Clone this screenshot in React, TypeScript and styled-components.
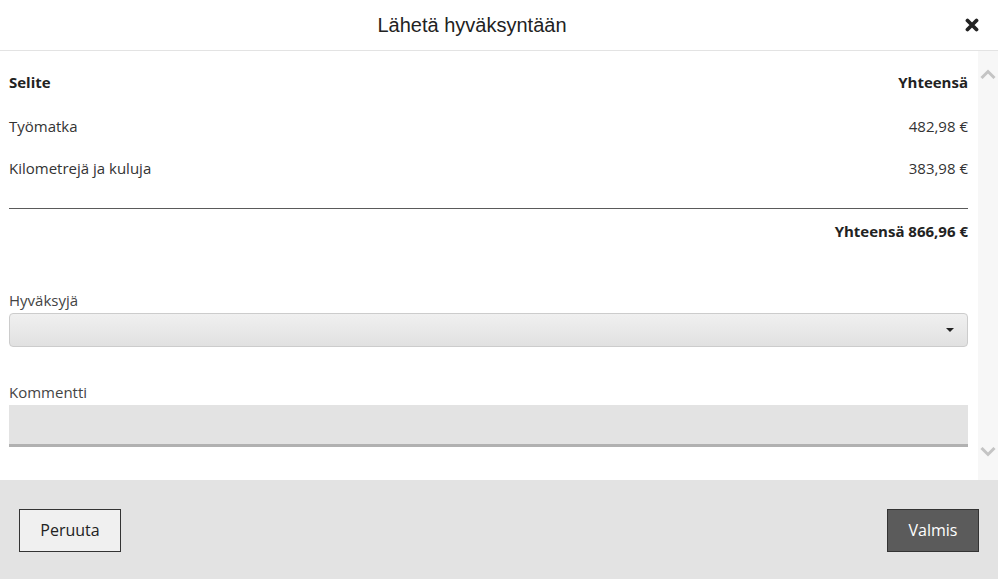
import React from 'react';
import styled, { createGlobalStyle } from 'styled-components';

const GlobalStyle = createGlobalStyle`
  html, body {
    margin: 0;
    padding: 0;
    background: #ffffff;
  }
  body {
    font-family: "Open Sans", "Noto Sans", sans-serif;
    color: #333;
  }
`;

const Dialog = styled.div`
  width: 998px;
  height: 579px;
  display: flex;
  flex-direction: column;
  background: #fff;
`;

const Header = styled.div`
  height: 50px;
  flex-shrink: 0;
  display: flex;
  align-items: center;
  justify-content: center;
  position: relative;
  padding-right: 54px;
  border-bottom: 1px solid #e3e3e3;
`;

const Title = styled.h1`
  margin: 0;
  font-family: "Liberation Sans", Arial, sans-serif;
  font-weight: 400;
  font-size: 20px;
  color: #222;
`;

const CloseButton = styled.button`
  position: absolute;
  right: 19px;
  top: 18px;
  border: 0;
  background: none;
  padding: 0;
  display: flex;
  cursor: pointer;
`;

const Body = styled.div`
  flex: 1;
  display: flex;
  min-height: 0;
`;

const Content = styled.div`
  flex: 1;
  padding: 9px 10px 0 9px;
  font-size: 15px;
`;

const Scrollbar = styled.div`
  width: 20px;
  background: #f7f7f7;
  display: flex;
  flex-direction: column;
  justify-content: space-between;
  align-items: center;
  padding: 18px 0 23px;
  box-sizing: border-box;
`;

const Row = styled.div<{ $h: number; $bold?: boolean; $end?: boolean }>`
  height: ${(p) => p.$h}px;
  display: flex;
  align-items: center;
  justify-content: ${(p) => (p.$end ? 'flex-end' : 'space-between')};
  font-weight: ${(p) => (p.$bold ? 700 : 400)};
  color: ${(p) => (p.$bold ? '#222' : '#333')};
`;

const Divider = styled.div`
  margin-top: 20px;
  height: 1px;
  background: #5a5a5a;
`;

const Label = styled.label<{ $top: number }>`
  display: block;
  margin-top: ${(p) => p.$top}px;
  line-height: 20px;
  color: #444;
`;

const Select = styled.div`
  margin-top: 3px;
  height: 34px;
  box-sizing: border-box;
  border: 1px solid #cccccc;
  border-radius: 4px;
  background: linear-gradient(to bottom, #f0f0f0, #e1e1e1);
  display: flex;
  align-items: center;
  justify-content: flex-end;
  padding-right: 13px;
`;

const Caret = styled.span`
  width: 0;
  height: 0;
  border-left: 4px solid transparent;
  border-right: 4px solid transparent;
  border-top: 4px solid #222;
`;

const Comment = styled.div`
  margin-top: 3px;
  height: 42px;
  box-sizing: border-box;
  background: #e3e3e3;
  border-bottom: 3px solid #b1b1b1;
`;

const Footer = styled.div`
  height: 99px;
  flex-shrink: 0;
  background: #e3e3e3;
  display: flex;
  align-items: center;
  justify-content: space-between;
  padding: 1px 19px 0;
  box-sizing: border-box;
`;

const Button = styled.button<{ $primary?: boolean }>`
  height: 43px;
  width: ${(p) => (p.$primary ? 92 : 102)}px;
  padding: 0;
  font-family: "Open Sans", "Noto Sans", sans-serif;
  font-size: 16px;
  border: 1px solid #333;
  border-radius: 0;
  background: ${(p) => (p.$primary ? '#5b5b5b' : '#f0f0f0')};
  color: ${(p) => (p.$primary ? '#fff' : '#222')};
  cursor: pointer;
`;

const CloseIcon = () => (
  <svg width="14" height="14" viewBox="0 0 14 14">
    <path d="M2.5 2.5 L11.5 11.5 M11.5 2.5 L2.5 11.5" stroke="#222" strokeWidth="3.8" strokeLinecap="round" />
  </svg>
);

const Chevron = ({ up }: { up?: boolean }) => (
  <svg width="16" height="10" viewBox="0 0 16 10">
    <path
      d={up ? 'M1.5 9 L8 2.5 L14.5 9' : 'M1.5 1 L8 7.5 L14.5 1'}
      fill="none"
      stroke="#c4c4c4"
      strokeWidth="3"
    />
  </svg>
);

const items = [
  { name: 'Työmatka', total: '482,98 €', h: 44 },
  { name: 'Kilometrejä ja kuluja', total: '383,98 €', h: 40 },
];

const App: React.FC = () => {
  return (
    <>
      <GlobalStyle />
      <Dialog>
        <Header>
          <Title>Lähetä hyväksyntään</Title>
          <CloseButton aria-label="Sulje">
            <CloseIcon />
          </CloseButton>
        </Header>
        <Body>
          <Content>
            <Row $h={44} $bold>
              <span>Selite</span>
              <span>Yhteensä</span>
            </Row>
            {items.map((item, index) => (
              <Row key={index} $h={item.h}>
                <span>{item.name}</span>
                <span>{item.total}</span>
              </Row>
            ))}
            <Divider />
            <Row $h={44} $bold $end>
              Yhteensä 866,96 €
            </Row>
            <Label $top={37}>Hyväksyjä</Label>
            <Select>
              <Caret />
            </Select>
            <Label $top={35}>Kommentti</Label>
            <Comment />
          </Content>
          <Scrollbar>
            <Chevron up />
            <Chevron />
          </Scrollbar>
        </Body>
        <Footer>
          <Button>Peruuta</Button>
          <Button $primary>Valmis</Button>
        </Footer>
      </Dialog>
    </>
  );
};

export default App;
